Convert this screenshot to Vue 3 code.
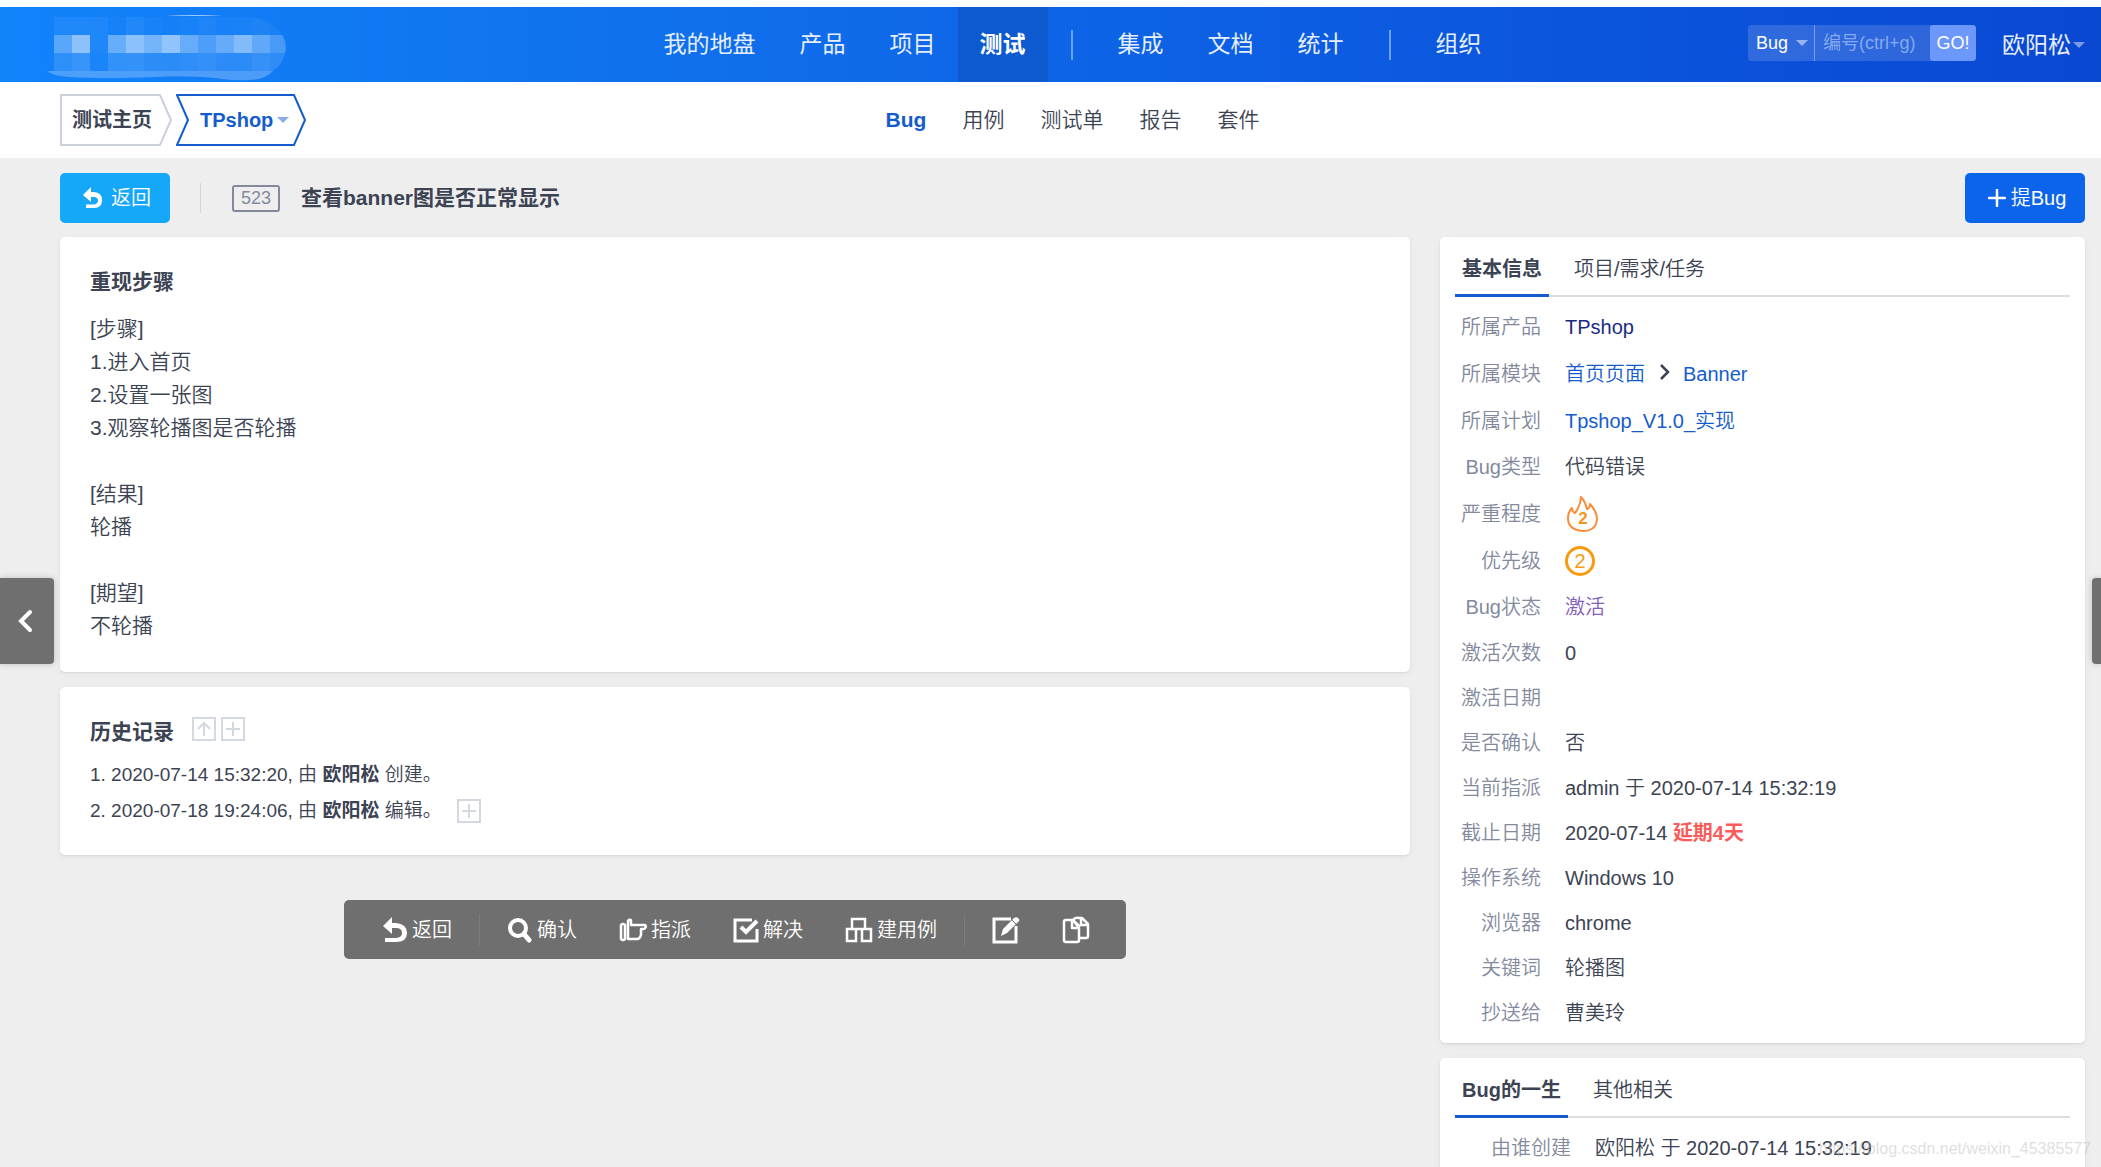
<script setup>
import { ref } from 'vue'

const mosaic = [
  [6, 6, 6, 2, 7, 3, 2, 3, 6, 3, 4, 6, 4],
  [30, 52, 6, 36, 52, 42, 54, 36, 26, 36, 48, 34, 24],
  [12, 16, 4, 14, 15, 12, 11, 13, 15, 12, 12, 16, 13]
]

const navGroups = [
  ['我的地盘', '产品', '项目', '测试'],
  ['集成', '文档', '统计'],
  ['组织']
]
const subNav = ['Bug', '用例', '测试单', '报告', '套件']

const searchType = ref('Bug')
const searchId = ref('')

const steps = [
  '[步骤]', '1.进入首页', '2.设置一张图', '3.观察轮播图是否轮播', '',
  '[结果]', '轮播', '',
  '[期望]', '不轮播'
]

const history = [
  { time: '2020-07-14 15:32:20', user: '欧阳松', action: '创建', more: false },
  { time: '2020-07-18 19:24:06', user: '欧阳松', action: '编辑', more: true }
]

const info = [
  { label: '激活次数', value: '0' },
  { label: '激活日期', value: '' },
  { label: '是否确认', value: '否' },
  { label: '当前指派', value: 'admin 于 2020-07-14 15:32:19' },
  { label: '截止日期', value: '2020-07-14', late: '延期4天' },
  { label: '操作系统', value: 'Windows 10' },
  { label: '浏览器', value: 'chrome' },
  { label: '关键词', value: '轮播图' },
  { label: '抄送给', value: '曹美玲' }
]
</script>

<template>
  <div class="page">
    <header class="header">
      <a class="logo" href="#" aria-label="首页">
        <svg width="244" height="72" viewBox="0 0 244 72">
          <defs>
            <clipPath id="brush">
              <path d="M9 8H206Q240 14 241 40Q238 56 228 62H9Z" />
            </clipPath>
          </defs>
          <g clip-path="url(#brush)" fill="#fff">
            <g v-for="(row, r) in mosaic" :key="r">
              <rect
                v-for="(level, c) in row" :key="c"
                :x="9 + c * 18" :y="8 + r * 18" width="18" height="18" :fill-opacity="level / 100"
              />
            </g>
          </g>
          <path d="M2 62H228Q220 71 204 71Q190 72 170 69Q140 66 110 68Q60 70 24 68Q8 67 2 62Z" fill="#fff" fill-opacity=".25" />
          <path d="M120 7Q150 5 178 7Z" fill="#fff" fill-opacity=".6" />
        </svg>
      </a>
      <nav class="nav">
        <template v-for="(group, g) in navGroups" :key="g">
          <span v-if="g > 0" class="nav-divider"></span>
          <a v-for="name in group" :key="name" href="#" :class="{ active: name === '测试' }">{{ name }}</a>
        </template>
      </nav>
      <div class="tools">
        <form class="search" @submit.prevent>
          <div class="search-type">
            <select v-model="searchType" aria-label="搜索类型">
              <option>Bug</option>
            </select>
            <i class="caret"></i>
          </div>
          <input v-model="searchId" type="text" placeholder="编号(ctrl+g)" aria-label="编号">
          <button type="submit">GO!</button>
        </form>
        <a class="user" href="#">欧阳松<i class="caret"></i></a>
      </div>
    </header>

    <div class="subheader">
      <div class="crumbs">
        <a class="crumb" href="#">
          <svg width="112" height="52" viewBox="0 0 112 52"><path d="M1 1H100L111 26L100 51H1Z" /></svg>
          <span>测试主页</span>
        </a>
        <a class="crumb current" href="#">
          <svg width="130" height="52" viewBox="0 0 130 52"><path d="M1 1H118L129 26L118 51H1L12 26Z" /></svg>
          <span>TPshop</span><i class="caret"></i>
        </a>
      </div>
      <nav class="subnav">
        <a v-for="name in subNav" :key="name" href="#" :class="{ active: name === 'Bug' }">{{ name }}</a>
      </nav>
      <div></div>
    </div>

    <div class="titlebar">
      <button type="button" class="btn back">
        <svg width="20" height="22" viewBox="0 0 20 22"><path d="M0 8L8 0V5H11Q19 5.500 19 13Q19 21 11 21H3V17.500H11Q15 17 15 13.500Q15 10 11 10H8V15Z" /></svg>
        返回
      </button>
      <span class="rule"></span>
      <span class="bug-id">523</span>
      <h1>查看banner图是否正常显示</h1>
      <button type="button" class="btn create">
        <svg width="18" height="18" viewBox="0 0 18 18"><path d="M9 1V17M1 9H17" stroke="#fff" stroke-width="2.500" stroke-linecap="round" /></svg>
        提Bug
      </button>
    </div>

    <main class="content">
      <div class="left">
        <section class="card steps">
          <h2>重现步骤</h2>
          <p v-for="(line, i) in steps" :key="i">{{ line }}</p>
        </section>

        <section class="card history">
          <div class="history-head">
            <h2>历史记录</h2>
            <button type="button" class="mini" aria-label="切换顺序">
              <svg width="24" height="24" viewBox="0 0 24 24"><path d="M1 1H23V23H1Z" /><path d="M12 19V6M6 12L12 6L18 12" /></svg>
            </button>
            <button type="button" class="mini" aria-label="切换显示">
              <svg width="24" height="24" viewBox="0 0 24 24"><path d="M1 1H23V23H1Z" /><path d="M12 5V19M5 12H19" /></svg>
            </button>
          </div>
          <ol>
            <li v-for="(item, i) in history" :key="item.time">
              <span>{{ i + 1 }}. {{ item.time }}, 由 <strong>{{ item.user }}</strong> {{ item.action }}。</span>
              <button v-if="item.more" type="button" class="mini" aria-label="展开">
                <svg width="24" height="24" viewBox="0 0 24 24"><path d="M1 1H23V23H1Z" /><path d="M12 5V19M5 12H19" /></svg>
              </button>
            </li>
          </ol>
        </section>

        <div class="actions">
          <button type="button">
            <svg width="26" height="26" viewBox="0 0 26 26"><path fill="#fff" d="M1 9L10 0V6H14Q25 7 25 16Q25 25 14 25H3V21H14Q20 20.500 20 16Q20 11 14 11H10V17Z" /></svg>
            返回
          </button>
          <span class="split"></span>
          <button type="button">
            <svg width="26" height="26" viewBox="0 0 26 26"><circle cx="11" cy="11" r="8" stroke-width="4" /><path d="M17 17L22 23" stroke-width="5" stroke-linecap="round" /></svg>
            确认
          </button>
          <button type="button">
            <svg width="28" height="26" viewBox="0 0 28 26"><path d="M2 8Q4 6 6 8V22Q4 24 2 22ZM9 22V10L9 4Q10 2 12 3V8H26Q28 10 25 12H22V18Q21 22 18 22Z" stroke-width="2.500" stroke-linejoin="round" /></svg>
            指派
          </button>
          <button type="button">
            <svg width="26" height="26" viewBox="0 0 26 26"><path d="M19 3H2V24H24V12" stroke-width="3" /><path d="M8 10L13 15L24 4" stroke-width="4" /></svg>
            解决
          </button>
          <button type="button">
            <svg width="28" height="26" viewBox="0 0 28 26"><path d="M7 12V2H20V12M2 12H11V24H2ZM17 12H26V24H17ZM11 12H17" stroke-width="2.500" /></svg>
            建用例
          </button>
          <span class="split"></span>
          <button type="button" aria-label="编辑">
            <svg width="28" height="28" viewBox="0 0 28 28"><path d="M19 3H2V26H24V10" stroke-width="3" /><path fill="#fff" d="M9 20L11 13L22 2Q25 0 27 3Q28 5 26 6L15 17Z" /><path d="M20 4L25 9" stroke="#6f6f6f" stroke-width="1" /></svg>
          </button>
          <button type="button" aria-label="复制">
            <svg width="28" height="28" viewBox="0 0 28 28"><path d="M11 4H4Q2 4 2 6V24Q2 26 4 26H15Q17 26 17 24V12ZM10 4V12H17M11 4Q13 1 17 2H20L26 8V20Q26 22 24 22H18M19 2V9H26M11 4L18 11" stroke-width="2.500" stroke-linejoin="round" /></svg>
          </button>
        </div>
      </div>

      <aside class="right">
        <section class="card">
          <div class="tabs">
            <a class="active" href="#">基本信息</a>
            <a href="#">项目/需求/任务</a>
          </div>
          <table class="info">
            <tbody>
              <tr><th scope="row">所属产品</th><td><a class="visited" href="#">TPshop</a></td></tr>
              <tr class="tall">
                <th scope="row">所属模块</th>
                <td>
                  <a href="#">首页页面</a>
                  <svg class="chevron" width="12" height="18" viewBox="0 0 12 18"><path d="M2 2L9 9L2 16" fill="none" stroke="#3c4353" stroke-width="2.500" /></svg>
                  <a href="#">Banner</a>
                </td>
              </tr>
              <tr><th scope="row">所属计划</th><td><a href="#">Tpshop_V1.0_实现</a></td></tr>
              <tr><th scope="row">Bug类型</th><td>代码错误</td></tr>
              <tr class="tall">
                <th scope="row">严重程度</th>
                <td>
                  <svg class="fire" width="34" height="36" viewBox="0 0 34 36">
                    <path d="M16 1Q20 5 22 13Q25 12 25 8Q32 16 32 23Q31 35 18 35Q3 34 3 22Q3 16 7 12Q7 16 10 17Q15 11 16 1Z" fill="none" stroke="#fb8c3a" stroke-width="2" stroke-linejoin="round" />
                    <text x="18" y="28" text-anchor="middle">2</text>
                  </svg>
                </td>
              </tr>
              <tr><th scope="row">优先级</th><td><span class="pri">2</span></td></tr>
              <tr><th scope="row">Bug状态</th><td class="status">激活</td></tr>
              <tr v-for="row in info" :key="row.label" class="plain">
                <th scope="row">{{ row.label }}</th>
                <td>{{ row.value }} <strong v-if="row.late">{{ row.late }}</strong></td>
              </tr>
            </tbody>
          </table>
        </section>

        <section class="card">
          <div class="tabs">
            <a class="active" href="#">Bug的一生</a>
            <a href="#">其他相关</a>
          </div>
          <table class="info life">
            <tbody>
              <tr><th scope="row">由谁创建</th><td>欧阳松 于 2020-07-14 15:32:19</td></tr>
            </tbody>
          </table>
        </section>
      </aside>
    </main>

    <button type="button" class="pager prev" aria-label="上一个">
      <svg width="18" height="24" viewBox="0 0 18 24"><path d="M14 3L5 12L14 21" fill="none" stroke="#fff" stroke-width="4" stroke-linecap="round" /></svg>
    </button>
    <button type="button" class="pager next" aria-label="下一个"></button>
    <span class="watermark">https://blog.csdn.net/weixin_45385577</span>
  </div>
</template>

<style>
body {
  background: #eee;
}
</style>

<style scoped>
.page {
  position: relative;
  height: 100vh;
  overflow: hidden;
  background: #eee;
  color: #3c4353;
  font: 350 20px/30px "Liberation Sans", "Noto Sans CJK SC", sans-serif;
}
a {
  color: inherit;
  text-decoration: none;
}
button,
input,
select {
  margin: 0;
  padding: 0;
  border: 0;
  background: none;
  color: inherit;
  font: inherit;
}
h1,
h2,
p,
ol {
  margin: 0;
  padding: 0;
  list-style: none;
}
h1,
h2 {
  font-size: 21px;
  font-weight: 700;
}
strong {
  font-weight: 700;
}
svg {
  display: block;
  flex: none;
}
.caret {
  width: 0;
  border: 6px solid transparent;
  border-top-color: currentColor;
  border-bottom: 0;
  opacity: .5;
}

.header,
.subheader {
  display: grid;
  grid-template-columns: 1fr auto 1fr;
  align-items: center;
  padding: 0 16px 0 60px;
}
.header {
  height: 75px;
  border-top: 7px solid #fdfeff;
  background: linear-gradient(90deg, #1183fb, #0f6bea 40%, #0b55dd 75%, #0a48d2) padding-box;
  color: #e6effd;
}
.logo {
  margin-left: -15px;
}
.nav {
  display: flex;
  align-items: center;
  font-size: 23px;
  font-weight: 400;
}
.nav a {
  padding: 0 22px;
  line-height: 75px;
}
.nav a.active {
  background: #0d59ce;
  color: #fff;
  font-weight: 700;
}
.nav-divider {
  width: 2px;
  height: 30px;
  margin: 0 23px;
  background: #6ba2f5;
}
.tools {
  display: flex;
  justify-content: flex-end;
  align-items: center;
  gap: 26px;
}
.search {
  display: flex;
  height: 36px;
  margin-top: -3px;
  overflow: hidden;
  border-radius: 3px;
  background: rgba(255, 255, 255, .15);
  color: #fff;
  font-size: 18px;
  font-weight: 400;
}
.search-type {
  display: flex;
  align-items: center;
  padding: 0 6px 0 8px;
  border-right: 1px solid rgba(255, 255, 255, .35);
}
.search-type select {
  width: 40px;
  appearance: none;
}
.search input {
  width: 107px;
  padding-left: 8px;
}
.search input::placeholder {
  color: #85a9ee;
  opacity: 1;
}
.search button {
  width: 46px;
  border-radius: 3px;
  background: #6c97fb;
}
.user {
  display: flex;
  align-items: center;
  gap: 2px;
  font-size: 23px;
  font-weight: 400;
}

.subheader {
  height: 76px;
  background: #fff;
}
.crumbs {
  display: flex;
  gap: 4px;
}
.crumb {
  position: relative;
  display: flex;
  align-items: center;
  gap: 4px;
  width: 100px;
  height: 52px;
  padding-left: 12px;
  font-weight: 700;
}
.crumb svg {
  position: absolute;
  left: 0;
  top: 0;
  fill: none;
  stroke: #cbd0db;
  stroke-width: 2;
}
.crumb.current {
  width: 106px;
  padding-left: 24px;
  color: #145ccd;
}
.crumb.current svg {
  stroke: #145ccd;
}
.subnav {
  display: flex;
  gap: 36px;
  font-size: 21px;
}
.subnav .active {
  color: #145ccd;
  font-weight: 700;
}

.titlebar {
  display: flex;
  align-items: center;
  padding: 15px 16px 14px 60px;
}
.btn {
  display: flex;
  align-items: center;
  justify-content: center;
  height: 50px;
  padding-left: 4px;
  border-radius: 5px;
  color: #fff;
}
.btn.back {
  gap: 8px;
  width: 110px;
  background: #16a8f8;
}
.back svg {
  fill: #fff;
}
.btn.create {
  gap: 5px;
  width: 120px;
  margin-left: auto;
  background: #0c64eb;
}
.rule {
  width: 1px;
  height: 30px;
  margin: 0 31px 0 30px;
  background: #d3d5d9;
}
.bug-id {
  width: 44px;
  margin-right: 21px;
  border: 2px solid #838a9d;
  border-radius: 3px;
  color: #838a9d;
  font-size: 18px;
  line-height: 23px;
  text-align: center;
}

.content {
  display: grid;
  grid-template-columns: 1350fr 645fr;
  gap: 30px;
  align-items: start;
  padding: 0 16px 0 60px;
}
.card {
  margin-bottom: 15px;
  border-radius: 5px;
  background: #fff;
  box-shadow: 0 1px 2px rgba(0, 0, 0, .08), 0 2px 8px rgba(0, 0, 0, .04);
}
.steps {
  padding: 30px;
}
.steps h2 {
  margin-bottom: 15px;
}
.steps p {
  height: 33px;
  font-size: 21px;
  line-height: 33px;
}
.history {
  padding: 30px 30px 26px;
}
.history-head {
  display: flex;
  gap: 5px;
  margin-bottom: 10px;
}
.history-head h2 {
  margin-right: 13px;
}
.mini {
  height: 24px;
}
.mini svg {
  fill: none;
  stroke: #d4d8e1;
  stroke-width: 2;
}
.history li {
  display: flex;
  align-items: center;
  gap: 15px;
  height: 36px;
  font-size: 19px;
}

.actions {
  display: flex;
  align-items: center;
  width: max-content;
  height: 59px;
  margin: 45px auto 0;
  padding: 0 15px 0 17px;
  border-radius: 5px;
  background: #6f6f6f;
  color: #fff;
}
.actions button {
  display: flex;
  align-items: center;
  gap: 4px;
  padding: 0 21px;
}
.actions svg {
  fill: none;
  stroke: #fff;
}
.actions svg [fill] {
  stroke: none;
}
.split {
  width: 1px;
  height: 32px;
  margin: 0 6px;
  background: #7d7d7d;
}

.tabs {
  display: flex;
  gap: 18px;
  height: 58px;
  margin: 0 15px;
  border-bottom: 2px solid #dcdcdc;
}
.tabs a {
  height: 57px;
  padding: 0 7px;
  line-height: 64px;
}
.tabs .active {
  border-bottom: 3px solid #145ccd;
  font-weight: 700;
}
.info {
  width: 100%;
  padding: 7px 15px 8px;
  border-spacing: 0;
  table-layout: fixed;
}
.info tr {
  height: 46px;
}
.info tr.tall {
  height: 48px;
}
.info tr.plain {
  height: 45px;
}
.info th {
  width: 86px;
  padding: 0;
  color: #838a9d;
  font-weight: 350;
  text-align: right;
}
.life th {
  width: 116px;
}
.info td {
  padding: 0 0 0 24px;
}
.info td a {
  color: #145ccd;
}
.info td a.visited {
  color: #1a2b80;
}
.info strong {
  color: #fb5b5b;
}
.chevron {
  display: inline-block;
  margin: 0 12px 0 14px;
}
.fire text {
  fill: #f7941d;
  font-size: 17px;
  font-weight: 700;
}
.pri {
  display: block;
  width: 24px;
  border: 3px solid #f79a0e;
  border-radius: 50%;
  color: #f79a0e;
  line-height: 24px;
  text-align: center;
}
.info .status {
  color: #8160b8;
}

.pager {
  position: absolute;
  top: 578px;
  height: 86px;
  background: #6f6f6f;
  box-shadow: 0 0 6px rgba(0, 0, 0, .2);
}
.prev {
  left: 0;
  width: 54px;
  padding-left: 16px;
  border-radius: 0 4px 4px 0;
}
.next {
  right: 0;
  width: 9px;
  border-radius: 4px 0 0 4px;
}
.watermark {
  position: absolute;
  right: 10px;
  bottom: 3px;
  color: rgba(190, 190, 190, .5);
  font-family: "Liberation Sans", sans-serif;
  font-size: 16px;
}
</style>
